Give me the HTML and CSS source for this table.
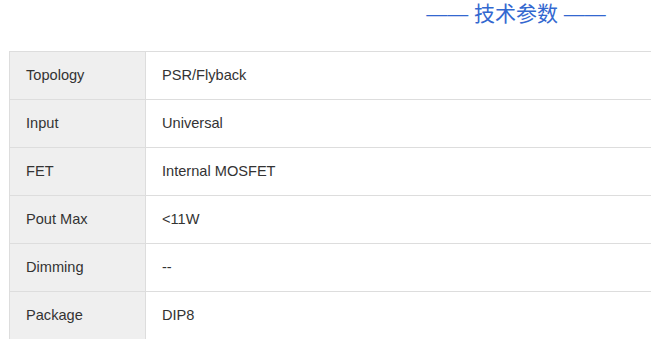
FILE: index.html
```html
<!DOCTYPE html>
<html lang="zh-CN">
<head>
  <meta charset="UTF-8" />
  <meta name="viewport" content="width=device-width, initial-scale=1.0"/>
  <title>技术参数</title>
  <link rel="stylesheet" href="styles.css">
</head>
<body>
  <div class="specs">
    <h2 class="specs-title">—— 技术参数 ——</h2>

    <table class="spec-table">
      <tr><th>Topology</th><td>PSR/Flyback</td></tr>
      <tr><th>Input</th><td>Universal</td></tr>
      <tr><th>FET</th><td>Internal MOSFET</td></tr>
      <tr><th>Pout Max</th><td>&lt;11W</td></tr>
      <tr><th>Dimming</th><td>--</td></tr>
      <tr><th>Package</th><td>DIP8</td></tr>
    </table>
  </div>
</body>
</html>
```

FILE: styles.css
```css
body {
  margin: 0;
  overflow: hidden;
  background-color: #fff;
  font-family: "Liberation Sans", Arial, sans-serif;
  color: #333;
}

.specs {
  width: 1014px;
  margin-left: 9px;
}

.specs-title {
  margin: 0 0 23px;
  text-align: center;
  font-family: "Liberation Sans", "Noto Sans CJK SC", sans-serif;
  font-size: 21px;
  font-weight: normal;
  line-height: 28px;
  color: #3368d0;
}

.spec-table {
  width: 100%;
  border-collapse: collapse;
  font-size: 14.6px;
}

.spec-table th,
.spec-table td {
  border: 1px solid #ddd;
  padding: 15px 16px;
  line-height: 17px;
  text-align: left;
  font-weight: normal;
}

.spec-table th {
  width: 103px;
  background-color: #efefef;
}
```
